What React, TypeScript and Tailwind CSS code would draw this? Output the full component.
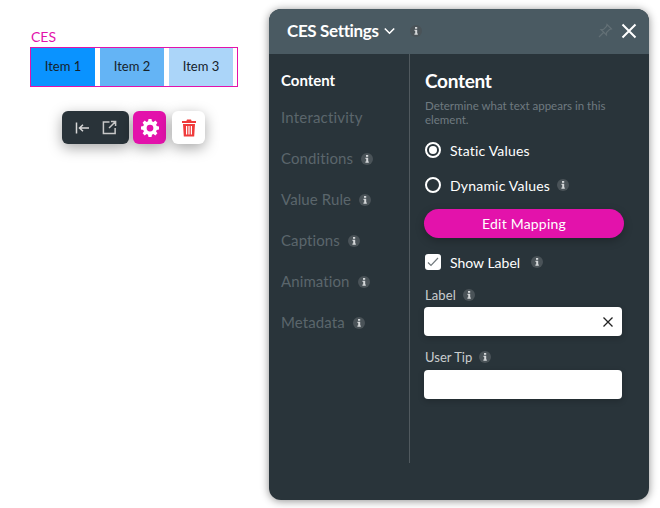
import React from "react";

function Info({ className = "" }: { className?: string }) {
  return (
    <span className={`inline-flex w-3 h-3 rounded-full bg-[#4a5358] items-center justify-center shrink-0 ${className}`}>
      <svg width="12" height="12" viewBox="0 0 12 12">
        <rect x="5" y="2" width="2.2" height="1.8" fill="#d4d7d9" />
        <path d="M4.500 4.800h2.700v3.800h.6v1.100H4.400V8.600h.8V5.900h-.7z" fill="#d4d7d9" />
      </svg>
    </span>
  );
}

function NavItem({ label }: { label: string }) {
  return (
    <div className="h-[41px] flex items-center text-[15px] tracking-[0.1px] text-[#5b666c]">
      <span>{label}</span>
      <Info className="ml-2" />
    </div>
  );
}

export default function App() {
  return (
    <div className="w-[660px] h-[508px] bg-white flex overflow-hidden" style={{ fontFamily: "Lato, sans-serif" }}>
      <div className="w-[269px] shrink-0 pl-[30px] pt-[29px]">
        <div className="text-[14px] leading-[16px] text-[#e312ab] pl-[1px] h-[18px]">CES</div>
        <div className="w-[208px] h-[40px] border border-[#e312ab] flex gap-[5px] text-[13px] text-[#16222b]">
          <div className="w-[64px] bg-[#0a93ff] flex items-center justify-center">Item 1</div>
          <div className="w-[64px] bg-[#64b4f5] flex items-center justify-center">Item 2</div>
          <div className="w-[64px] bg-[#abd5f9] flex items-center justify-center">Item 3</div>
        </div>
        <div className="flex mt-[24px] ml-[32px]">
          <div className="w-[67px] h-[33px] rounded-[6px] bg-[#293339] shadow-[0_4px_14px_rgba(0,0,0,0.35)] flex items-center pl-[13px] gap-[12px]">
            <svg width="15" height="16" viewBox="0 0 15 16" fill="none" stroke="#d8d8d8" strokeWidth="1.5">
              <path d="M1.500 2.500v11M14 8H4.500M8 4.800 4.500 8 8 11.200" />
            </svg>
            <svg width="15" height="15" viewBox="0 0 16 16" fill="none" stroke="#c8c8c8" strokeWidth="1.6">
              <path d="M8 2H1.500v12.500H14V8.500M9.500 1.500h5v5M14.200 1.800 7.500 8.500" />
            </svg>
          </div>
          <div className="ml-[4px] w-[33px] h-[33px] rounded-[6px] bg-[#e312ab] shadow-[0_4px_14px_rgba(0,0,0,0.35)] flex items-center justify-center">
            <svg width="18" height="18" viewBox="0 0 24 24">
              <path
                fill="#fff"
                fillRule="evenodd"
                d="M10 0h4l.6 3.100 1.900.8 2.600-1.800 2.800 2.800-1.800 2.600.8 1.900 3.100.6v4l-3.100.6-.8 1.900 1.800 2.600-2.800 2.800-2.600-1.800-1.900.8-.6 3.100h-4l-.6-3.100-1.900-.8-2.600 1.800-2.800-2.800 1.800-2.600-.8-1.900-3.100-.6v-4l3.100-.6.8-1.900L2.100 4.900l2.800-2.800 2.600 1.800 1.900-.8zM12 7.500a4.500 4.500 0 1 0 0 9 4.500 4.500 0 0 0 0-9z"
              />
            </svg>
          </div>
          <div className="ml-[6px] w-[33px] h-[33px] rounded-[6px] bg-white shadow-[0_4px_14px_rgba(0,0,0,0.35)] flex items-center justify-center">
            <svg width="14" height="18" viewBox="0 0 14 18">
              <path fill="#ef3b3b" d="M5 .5h4l.6 1.500H14v2H0V2h4.400zM1 5h12l-.8 12.500H1.800zM4 7v8.500h1.200V7zm2.400 0v8.500h1.200V7zM8.800 7v8.500H10V7z" fillRule="evenodd" />
            </svg>
          </div>
        </div>
      </div>

      <div className="w-[380px] h-[491px] mt-[9px] rounded-[12px] bg-[#29343a] shadow-[0_1px_8px_rgba(0,0,0,0.45)] flex flex-col overflow-hidden shrink-0">
        <div className="h-[45px] bg-[#4a5a62] flex items-center pl-[18px] pr-[12px] pb-[2px] shrink-0">
          <span className="text-[17px] font-bold text-white tracking-[-0.35px]">CES Settings</span>
          <svg className="ml-[5px]" width="11" height="8" viewBox="0 0 11 8" fill="none" stroke="#fff" strokeWidth="1.6">
            <path d="M.8 1.500 5.500 6.200 10.200 1.500" />
          </svg>
          <Info className="ml-[15px]" />
          <svg className="ml-auto" width="16" height="16" viewBox="0 0 16 16" fill="none" stroke="#626f75" strokeWidth="1.2">
            <path d="M10 1.500 14.500 6 12.500 6.500 9.500 9.500 9.500 12 4 6.500 6.500 6.500 9.500 3.500zM6.500 9.500 2 14" />
          </svg>
          <svg className="ml-[8px]" width="16" height="16" viewBox="0 0 16 16" fill="none" stroke="#fff" strokeWidth="2">
            <path d="M1.500 1.500 14.500 14.500M14.500 1.500 1.500 14.500" />
          </svg>
        </div>
        <div className="flex">
          <div className="w-[141px] h-[409px] border-r border-[#50595e] pl-[12px] pt-[6px] shrink-0">
            <div className="h-[41px] flex items-center text-[15px] font-bold text-white">Content</div>
            <div className="h-[33px] flex items-center text-[15px] tracking-[0.2px] text-[#5b666c]">Interactivity</div>
            <div className="mt-[4px]">
              <NavItem label="Conditions" />
              <NavItem label="Value Rule" />
              <NavItem label="Captions" />
              <NavItem label="Animation" />
              <NavItem label="Metadata" />
            </div>
          </div>
          <div className="pl-[14px] pt-[15px] flex-1">
            <div className="pl-[1px] text-[19px] leading-[24px] font-bold text-white tracking-[-0.3px]">Content</div>
            <div className="pl-[1px] mt-[6px] w-[201px] text-[11.500px] leading-[13.500px] text-[#6f7a80]">
              Determine what text appears in this element.
            </div>
            <div className="mt-[12px] pl-[1px] h-[24px] flex items-center text-[14px] tracking-[0.2px] text-white">
              <span className="w-[16px] h-[16px] rounded-full border-2 border-white flex items-center justify-center mr-[9px]">
                <span className="w-[8px] h-[8px] rounded-full bg-white" />
              </span>
              Static Values
            </div>
            <div className="mt-[11px] pl-[1px] h-[24px] flex items-center text-[14px] tracking-[0.2px] text-white">
              <span className="w-[16px] h-[16px] rounded-full border-2 border-white mr-[9px]" />
              Dynamic Values
              <Info className="ml-[7px]" />
            </div>
            <div className="mt-[12px] w-[200px] h-[29px] rounded-full bg-[#e312ab] shadow-[0_3px_8px_rgba(0,0,0,0.25)] flex items-center justify-center text-[14px] tracking-[0.2px] text-white">
              Edit Mapping
            </div>
            <div className="mt-[14px] pl-[1px] h-[20px] flex items-center text-[14px] text-white">
              <span className="w-[16px] h-[16px] rounded-[3px] bg-white flex items-center justify-center mr-[9px]">
                <svg width="12" height="10" viewBox="0 0 12 10" fill="none" stroke="#71797d" strokeWidth="1.2">
                  <path d="M1 5.500 4 8.500 11 1" />
                </svg>
              </span>
              Show Label
              <Info className="ml-[11px]" />
            </div>
            <div className="mt-[16px] pl-[1px] h-[16px] flex items-center text-[13px] tracking-[0.1px] text-[#c9cdcf]">
              Label
              <Info className="ml-[7px] -mt-[3px]" />
            </div>
            <div className="mt-[3px] w-[198px] h-[29px] rounded-[4px] bg-white shadow-[0_2px_6px_rgba(0,0,0,0.2)] flex items-center justify-end pr-[9px]">
              <svg width="10" height="10" viewBox="0 0 10 10" fill="none" stroke="#222" strokeWidth="1.300">
                <path d="M.5.500 9.500 9.500M9.500.500 .5 9.500" />
              </svg>
            </div>
            <div className="mt-[14px] pl-[1px] h-[16px] flex items-center text-[13px] text-[#c9cdcf]">
              User Tip
              <Info className="ml-[7px] -mt-[3px]" />
            </div>
            <div className="mt-[4px] w-[198px] h-[29px] rounded-[4px] bg-white shadow-[0_2px_6px_rgba(0,0,0,0.2)]" />
          </div>
        </div>
      </div>
    </div>
  );
}
